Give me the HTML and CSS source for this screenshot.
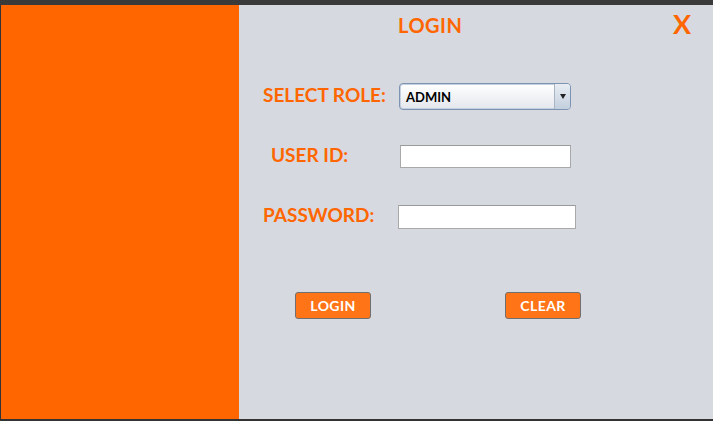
FILE: index.html
```html
<!DOCTYPE html>
<html>
<head>
<meta charset="utf-8">
<link rel="stylesheet" href="styles.css">
</head>
<body>
<div class="frame">
  <div class="topbar"></div>
  <div class="main">
    <div class="side"></div>
    <div class="panel">
      <div class="header">
        <span class="title">LOGIN</span>
        <span class="close">X</span>
      </div>
      <div class="row row-role">
        <span class="label">SELECT ROLE:</span>
        <div class="select">
          <span class="select-text">ADMIN</span>
          <span class="select-btn"><span class="tri"></span></span>
        </div>
      </div>
      <div class="row row-user">
        <span class="label">USER ID:</span>
        <div class="input input-user"></div>
      </div>
      <div class="row row-pass">
        <span class="label">PASSWORD:</span>
        <div class="input input-pass"></div>
      </div>
      <div class="buttons">
        <button class="btn">LOGIN</button>
        <button class="btn">CLEAR</button>
      </div>
    </div>
  </div>
  <div class="bottombar"></div>
</div>
</body>
</html>
```
FILE: styles.css
```css
html, body {
  margin: 0;
  padding: 0;
  width: 713px;
  height: 421px;
  overflow: hidden;
  background: #3a3a3a;
  font-family: Lato, "DejaVu Sans", sans-serif;
}
.frame {
  width: 713px;
  height: 421px;
  display: flex;
  flex-direction: column;
}
.topbar {
  height: 5px;
  background: #3a3a3a;
  flex: none;
}
.bottombar {
  height: 2px;
  background: #333;
  flex: none;
}
.main {
  flex: 1;
  display: flex;
  padding-left: 1px;
  background: #333;
}
.side {
  width: 238px;
  background: #ff6600;
  flex: none;
}
.panel {
  flex: 1;
  background: #d6d9e0;
  display: flex;
  flex-direction: column;
}
.header {
  height: 40px;
  display: flex;
  align-items: flex-start;
  justify-content: space-between;
  padding-left: 159px;
  padding-right: 22px;
}
.title {
  color: #ff6600;
  font-weight: bold;
  font-size: 20px;
  line-height: 20px;
  margin-top: 10px;
  letter-spacing: 0.5px;
}
.close {
  color: #ff6600;
  font-weight: bold;
  font-size: 27px;
  line-height: 27px;
  margin-top: 5px;
}
.row {
  display: flex;
  align-items: center;
}
.label {
  color: #ff6600;
  font-weight: bold;
  font-size: 19px;
  line-height: 20px;
  margin-bottom: 4px;
}
.row-role {
  margin-top: 38px;
  height: 27px;
  padding-left: 24px;
}
.row-role .label { width: 136px; }
.row-user {
  margin-top: 35px;
  height: 23px;
  padding-left: 32px;
}
.row-user .label { width: 129px; }
.row-pass {
  margin-top: 37px;
  height: 24px;
  padding-left: 24px;
}
.row-pass .label { width: 135px; }
.select {
  width: 172px;
  height: 27px;
  box-sizing: border-box;
  border: 1px solid #7d93b2;
  border-radius: 4px;
  background: linear-gradient(#ffffff, #e4e7ec);
  display: flex;
  align-items: center;
  box-shadow: inset 0 0 0 1px #c4d0e0;
}
.select-text {
  flex: 1;
  padding-left: 6px;
  font-weight: bold;
  font-size: 13px;
  color: #000;
}
.select-btn {
  width: 15px;
  height: 25px;
  border-left: 1px solid #a8b4c4;
  background: linear-gradient(#e8edf3, #c3cfde);
  border-radius: 0 3px 3px 0;
  display: flex;
  align-items: center;
  justify-content: center;
}
.tri {
  width: 0;
  height: 0;
  border-left: 3px solid transparent;
  border-right: 3px solid transparent;
  border-top: 5px solid #222;
}
.input {
  box-sizing: border-box;
  background: #fff;
  border: 1px solid #a9a9a9;
  border-top-color: #9a9a9a;
}
.input-user { width: 171px; height: 23px; }
.input-pass { width: 178px; height: 24px; }
.buttons {
  margin-top: 63px;
  display: flex;
  padding-left: 56px;
  gap: 134px;
}
.btn {
  width: 76px;
  height: 27px;
  box-sizing: border-box;
  border: 1px solid #707070;
  border-radius: 3px;
  background: #ff7417;
  color: #fff;
  font-family: Lato, "DejaVu Sans", sans-serif;
  font-weight: bold;
  font-size: 14px;
  padding: 0;
  letter-spacing: 0.4px;
}
```
